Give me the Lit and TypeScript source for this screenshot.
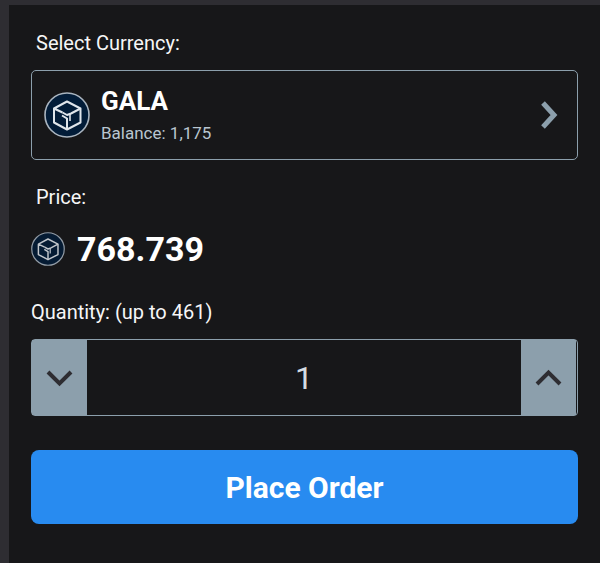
import { LitElement, html, css } from "lit";
import { customElement, state } from "lit/decorators.js";

@customElement("gala-coin")
class GalaCoin extends LitElement {
  static styles = css`
    :host { display: block; flex: none; }
    svg { display: block; width: 100%; height: 100%; }
  `;
  render() {
    return html`<svg viewBox="0 0 46 46" fill="none" aria-hidden="true">
      <circle cx="23" cy="23" r="22" fill="#021c38" stroke="#a9b4bf" stroke-width="1.6" />
      <g stroke="#dfe5eb" stroke-width="2" stroke-linejoin="round">
        <path d="M18.500 20.500 10 16.500 23 9.500 36.500 16.500V30.500L23 37.500 10 30.500V16.500" />
        <path d="M36.500 16.500 27 21.500 23 23 18.500 20.500" />
        <path d="M23 37V26.500L18 23.500" />
        <path d="M26 21.500V29" stroke-width="1.600" />
      </g>
    </svg>`;
  }
}

@customElement("app-root")
class AppRoot extends LitElement {
  @state() private quantity = 1;
  private readonly max = 461;

  static styles = css`
    :host {
      display: block;
      box-sizing: border-box;
      min-height: 100vh;
      padding: 5px 0 0 9px;
      background: #2e2d32;
      color: #fff;
      font-family: Roboto, "Liberation Sans", sans-serif;
    }
    * { box-sizing: border-box; }
    button, input { font: inherit; color: inherit; margin: 0; padding: 0; border: 0; }
    button { cursor: pointer; }
    form {
      display: flex;
      flex-direction: column;
      min-height: calc(100vh - 5px);
      padding: 26px 22px 38px;
      background: #171719;
    }
    .label { font-size: 20px; line-height: 24px; color: #f6f6f7; }
    .inset { padding-left: 5px; }
    .currency {
      display: flex;
      align-items: center;
      gap: 11px;
      height: 90px;
      margin: 15px 0 25px;
      padding: 0 18px 0 12px;
      border: 1px solid #8c9fac;
      border-radius: 5px;
      background: none;
      text-align: left;
    }
    .large { width: 46px; height: 46px; }
    .small { width: 34px; height: 34px; opacity: 0.85; }
    .details { flex: 1; display: flex; flex-direction: column; gap: 4px; }
    .name { font-size: 26px; line-height: 32px; font-weight: 700; }
    .balance { font-size: 17px; line-height: 24px; color: #b9c6d0; }
    .chevron { display: block; flex: none; fill: none; stroke-width: 5; }
    .next { width: 20px; height: 28px; stroke: #8c9fac; }
    .price { display: flex; align-items: center; gap: 12px; height: 40px; margin: 20px 0 31px; }
    .amount { font-size: 34px; line-height: 40px; font-weight: 700; }
    .stepper {
      display: flex;
      height: 77px;
      margin: 15px 0 34px;
      padding-right: 1px;
      border: 1px solid #8c9fac;
      border-radius: 4px;
    }
    .step {
      display: grid;
      place-items: center;
      flex: none;
      width: 55px;
      background: #8c9fac;
    }
    .step .chevron { width: 28px; height: 18px; stroke: #2e2d32; stroke-width: 4; }
    .quantity {
      flex: 1;
      min-width: 0;
      background: none;
      text-align: center;
      font-size: 32px;
      color: #d5dce2;
      outline: none;
    }
    .order {
      height: 74px;
      border-radius: 8px;
      background: #288bf0;
      font-size: 30px;
      font-weight: 700;
    }
  `;

  private change(value: number) {
    this.quantity = Math.min(this.max, Math.max(1, value || 1));
  }

  render() {
    return html`<form @submit=${(e: Event) => e.preventDefault()}>
      <div class="label inset" id="currency-label">Select Currency:</div>
      <button class="currency" type="button" aria-describedby="currency-label">
        <gala-coin class="large"></gala-coin>
        <span class="details">
          <span class="name">GALA</span>
          <span class="balance">Balance: 1,175</span>
        </span>
        <svg class="chevron next" viewBox="0 0 20 28" aria-hidden="true"><path d="M4 2 15 14 4 26" /></svg>
      </button>
      <div class="label inset">Price:</div>
      <div class="price">
        <gala-coin class="small"></gala-coin>
        <span class="amount">768.739</span>
      </div>
      <label class="label" for="quantity">Quantity: (up to ${this.max})</label>
      <div class="stepper">
        <button class="step" type="button" aria-label="Decrease quantity" @click=${() => this.change(this.quantity - 1)}>
          <svg class="chevron" viewBox="0 0 28 18" aria-hidden="true"><path d="M2 3 13.500 14.500 25 3" /></svg>
        </button>
        <input class="quantity" id="quantity" type="text" inputmode="numeric" .value=${String(this.quantity)}
          @change=${(e: Event) => this.change(Number((e.target as HTMLInputElement).value))} />
        <button class="step" type="button" aria-label="Increase quantity" @click=${() => this.change(this.quantity + 1)}>
          <svg class="chevron" viewBox="0 0 28 18" aria-hidden="true"><path d="M2 15 13.500 3.500 25 15" /></svg>
        </button>
      </div>
      <button class="order" type="submit">Place Order</button>
    </form>`;
  }
}
